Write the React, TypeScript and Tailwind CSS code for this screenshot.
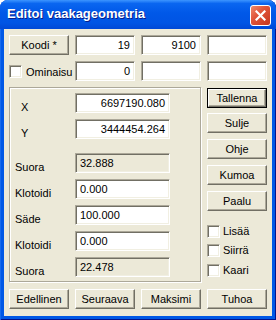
import React from "react";

const bevel =
  "border border-t-white border-l-white border-b-[#716F64] border-r-[#716F64] shadow-[inset_-1px_-1px_0_#ACA899] bg-[#ECE9D8]";
const sunken =
  "border border-t-[#ACA899] border-l-[#ACA899] border-b-white border-r-white shadow-[inset_1px_1px_0_#716F64,inset_-1px_-1px_0_#F1EFE2]";

function Btn({ children, def = false, w = "w-[60px]" }: { children: React.ReactNode; def?: boolean; w?: string }) {
  if (def) {
    return (
      <div className={`${w} h-[20px] border border-black flex`}>
        <div className={`${bevel} flex-1 flex items-center justify-center text-[11px] text-black`}>{children}</div>
      </div>
    );
  }
  return (
    <div className={`${bevel} ${w} h-[20px] flex items-center justify-center text-[11px] text-black`}>{children}</div>
  );
}

function Field({
  value = "",
  align = "right",
  readOnly = false,
  w = "w-[60px]",
}: {
  value?: string;
  align?: "left" | "right";
  readOnly?: boolean;
  w?: string;
}) {
  return (
    <div
      className={`${sunken} ${w} h-[20px] flex items-center text-[11px] text-black ${
        readOnly ? "bg-[#ECE9D8]" : "bg-white"
      } ${align === "right" ? "justify-end pr-[4px]" : "justify-start pl-[4px]"}`}
    >
      {value}
    </div>
  );
}

function Check() {
  return <div className={`${sunken} w-[13px] h-[13px] bg-white shrink-0`} />;
}

function Row({ label, children, indent = false, first = false, mt = "mt-[6px]" }: { label: string; children: React.ReactNode; indent?: boolean; first?: boolean; mt?: string }) {
  return (
    <div className={`flex items-center h-[20px] ${first ? "" : mt}`}>
      <div className={`w-[60px] pt-[8px] text-[11px] text-black ${indent ? "pl-[6px]" : ""}`}>{label}</div>
      {children}
    </div>
  );
}

export default function App() {
  return (
    <div className="w-[276px] h-[320px] flex flex-col bg-[#0058E6] rounded-t-[8px] overflow-hidden font-['Liberation_Sans',Arial,sans-serif] shadow-[inset_1px_0_0_#166AEE,inset_-1px_0_0_#00138C,inset_0_-1px_0_#00138C]">
      <div className="h-[29px] shrink-0 flex items-start justify-between pl-[7px] pr-[5px] bg-[linear-gradient(to_bottom,#3D95FF_0%,#0A66F0_12%,#0058E8_45%,#0054E4_80%,#0048D6_100%)]">
        <div className="mt-[6px] text-white font-bold text-[13px] leading-[16px] [text-shadow:1px_1px_0_#0A1E8A]">
          Editoi vaakageometria
        </div>
        <div className="mt-[5px] w-[21px] h-[21px] rounded-[3px] border border-white bg-[linear-gradient(135deg,#F08A6C_0%,#E0553A_40%,#C7361E_100%)] flex items-center justify-center">
          <svg width="11" height="11" viewBox="0 0 11 11">
            <path d="M1.5 1.5 L9.5 9.5 M9.5 1.5 L1.5 9.5" stroke="white" strokeWidth="2.2" strokeLinecap="square" />
          </svg>
        </div>
      </div>
      <div className="mx-[4px] mb-[4px] flex-1 bg-[#ECE9D8] px-[5px] pt-[6px] flex flex-col">
        <div className="flex gap-[6px]">
          <Btn>Koodi *</Btn>
          <Field value="19" />
          <Field value="9100" />
          <Field />
        </div>
        <div className="mt-[6px] flex gap-[6px]">
          <div className="w-[60px] h-[20px] flex items-center gap-[4px]">
            <Check />
            <span className="text-[11px] text-black pt-[2px]">Ominaisu</span>
          </div>
          <Field value="0" />
          <Field />
          <Field />
        </div>
        <div className="mt-[6px] flex gap-[6px]">
          <div className="w-[192px] h-[195px] border border-[#ACA899] shadow-[inset_1px_1px_0_#fff,1px_1px_0_#fff] pt-[5px] pl-[5px] flex flex-col">
            <Row label="X" indent first>
              <Field value="6697190.080" w="w-[95px]" />
            </Row>
            <Row label="Y" indent>
              <Field value="3444454.264" w="w-[95px]" />
            </Row>
            <Row label="Suora" mt="mt-[14px]">
              <Field value="32.888" align="left" readOnly w="w-[95px]" />
            </Row>
            <Row label="Klotoidi">
              <Field value="0.000" align="left" w="w-[95px]" />
            </Row>
            <Row label="Säde">
              <Field value="100.000" align="left" w="w-[95px]" />
            </Row>
            <Row label="Klotoidi">
              <Field value="0.000" align="left" w="w-[95px]" />
            </Row>
            <Row label="Suora">
              <Field value="22.478" align="left" readOnly w="w-[95px]" />
            </Row>
          </div>
          <div className="w-[60px] flex flex-col pt-[1px]">
            <Btn def>Tallenna</Btn>
            <div className="mt-[5px]">
              <Btn>Sulje</Btn>
            </div>
            <div className="mt-[6px]">
              <Btn>Ohje</Btn>
            </div>
            <div className="mt-[6px]">
              <Btn>Kumoa</Btn>
            </div>
            <div className="mt-[6px]">
              <Btn>Paalu</Btn>
            </div>
            <div className="mt-[14px] flex items-center gap-[3px] h-[13px]">
              <Check />
              <span className="text-[11px] text-black">Lisää</span>
            </div>
            <div className="mt-[6px] flex items-center gap-[3px] h-[13px]">
              <Check />
              <span className="text-[11px] text-black">Siirrä</span>
            </div>
            <div className="mt-[7px] flex items-center gap-[3px] h-[13px]">
              <Check />
              <span className="text-[11px] text-black">Kaari</span>
            </div>
          </div>
        </div>
        <div className="mt-[7px] flex gap-[6px]">
          <Btn>Edellinen</Btn>
          <Btn>Seuraava</Btn>
          <Btn>Maksimi</Btn>
          <Btn>Tuhoa</Btn>
        </div>
      </div>
    </div>
  );
}
